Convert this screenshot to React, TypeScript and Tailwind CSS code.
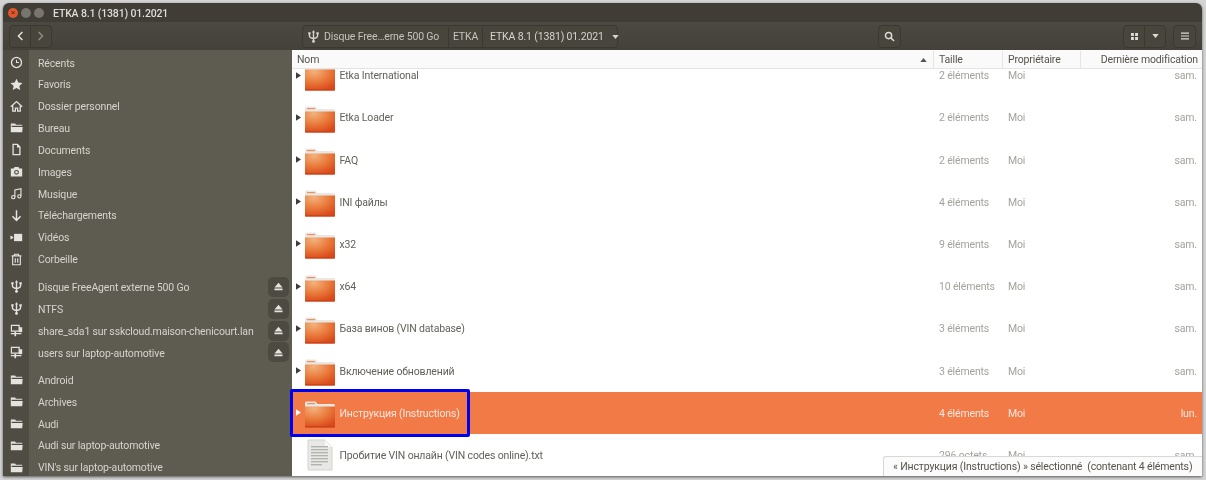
import React from "react";

const ICON = "#e4e3de";

function Glyph({ children }: { children: React.ReactNode }) {
  return (
    <svg viewBox="0 0 16 16" className="size-[13px] shrink-0" fill={ICON}>
      {children}
    </svg>
  );
}

const ClockIcon = () => (
  <Glyph>
    <circle cx="8" cy="8" r="6.2" fill="none" stroke={ICON} strokeWidth="1.6" />
    <path d="M8 4.5V8H11" fill="none" stroke={ICON} strokeWidth="1.3" />
  </Glyph>
);
const StarIcon = () => (
  <Glyph>
    <path d="M8 .8l2.2 4.8 5.2.6-3.9 3.5 1.1 5.2L8 12.3l-4.6 2.6 1.1-5.2L.6 6.2l5.2-.6z" />
  </Glyph>
);
const HomeIcon = () => (
  <Glyph>
    <path
      d="M1 8.2L8 2l7 6.2M3.4 7v6.8h3.2V10h2.8v3.8h3.2V7"
      fill="none"
      stroke={ICON}
      strokeWidth="1.6"
    />
  </Glyph>
);
const FolderIcon = () => (
  <Glyph>
    <path d="M1 3.2h5.2l1.2 1.5H15v1H2v1.6h13.6l-.6 6.5H1z" />
  </Glyph>
);
const DocIcon = () => (
  <Glyph>
    <path fillRule="evenodd" d="M3 1h6.5L13 4.5V15H3zM4.6 2.6v10.8h6.8V5.6H8.6v-3z" />
  </Glyph>
);
const CameraIcon = () => (
  <Glyph>
    <path
      fillRule="evenodd"
      d="M5.5 2.5h5l1 1.8H15V14H1V4.3h3.5zM8 6a3 3 0 100 6 3 3 0 000-6z"
    />
    <circle cx="8" cy="9" r="1.5" />
  </Glyph>
);
const MusicIcon = () => (
  <Glyph>
    <path d="M6 12.5V3.5L13.5 2v9" fill="none" stroke={ICON} strokeWidth="1.4" />
    <circle cx="4" cy="12.5" r="2" fill="none" stroke={ICON} strokeWidth="1.4" />
    <circle cx="11.5" cy="11.5" r="2" fill="none" stroke={ICON} strokeWidth="1.4" />
  </Glyph>
);
const DownIcon = () => (
  <Glyph>
    <path d="M8 1.500V14M3 9l5 5 5-5" fill="none" stroke={ICON} strokeWidth="1.8" />
  </Glyph>
);
const VideoIcon = () => (
  <Glyph>
    <rect x="5" y="3.5" width="10" height="9" />
    <path d="M.5 5.500l3.500 2v1L.5 10.500z" />
  </Glyph>
);
const TrashIcon = () => (
  <Glyph>
    <path
      d="M2 3.500h12M5.500 3V1.500h5V3M3.300 3.800V14.500h9.400V3.800M6.500 6.500v5.500M9.500 6.500v5.500"
      fill="none"
      stroke={ICON}
      strokeWidth="1.4"
    />
  </Glyph>
);
const UsbIcon = ({ color = ICON }: { color?: string }) => (
  <svg viewBox="0 0 16 16" className="size-[13px] shrink-0">
    <path
      d="M8 1v14M3 4.500V7.500Q3 9.800 8 10.500Q13 9.800 13 7.500V4.500"
      fill="none"
      stroke={color}
      strokeWidth="1.7"
    />
    <path d="M8 .2l1.800 2.800H6.200zM1.500 2.800h3v2.500h-3zM11.500 2.800h3v2.500h-3z" fill={color} />
    <circle cx="8" cy="14" r="1.7" fill={color} />
  </svg>
);
const NetIcon = () => (
  <Glyph>
    <path fillRule="evenodd" d="M1 1h11v8.500H1zM2.500 2.500V8h8V2.500z" />
    <path d="M5.500 9.500h2V11H14v1.500H7.500V15h-2v-2.500H1V11h4.500z" />
    <rect x="11" y="4" width="4" height="6" />
  </Glyph>
);

const EjectIcon = () => (
  <svg viewBox="0 0 10 10" className="size-[9px]" fill={ICON}>
    <path d="M5 .8L9.500 6H.5zM.5 7.300h9v1.900h-9z" />
  </svg>
);

type Place = {
  label: string;
  icon: React.ReactNode;
  eject?: boolean;
};

const groupOne: Place[] = [
  { label: "Récents", icon: <ClockIcon /> },
  { label: "Favoris", icon: <StarIcon /> },
  { label: "Dossier personnel", icon: <HomeIcon /> },
  { label: "Bureau", icon: <FolderIcon /> },
  { label: "Documents", icon: <DocIcon /> },
  { label: "Images", icon: <CameraIcon /> },
  { label: "Musique", icon: <MusicIcon /> },
  { label: "Téléchargements", icon: <DownIcon /> },
  { label: "Vidéos", icon: <VideoIcon /> },
  { label: "Corbeille", icon: <TrashIcon /> },
];

const groupTwo: Place[] = [
  { label: "Disque FreeAgent externe 500 Go", icon: <UsbIcon />, eject: true },
  { label: "NTFS", icon: <UsbIcon />, eject: true },
  { label: "share_sda1 sur sskcloud.maison-chenicourt.lan", icon: <NetIcon />, eject: true },
  { label: "users sur laptop-automotive", icon: <NetIcon />, eject: true },
];

const groupThree: Place[] = [
  { label: "Android", icon: <FolderIcon /> },
  { label: "Archives", icon: <FolderIcon /> },
  { label: "Audi", icon: <FolderIcon /> },
  { label: "Audi sur laptop-automotive", icon: <FolderIcon /> },
  { label: "VIN's sur laptop-automotive", icon: <FolderIcon /> },
];

const files = [
  { name: "Etka International", size: "2 éléments", date: "sam." },
  { name: "Etka Loader", size: "2 éléments", date: "sam." },
  { name: "FAQ", size: "2 éléments", date: "sam." },
  { name: "INI файлы", size: "4 éléments", date: "sam." },
  { name: "x32", size: "9 éléments", date: "sam." },
  { name: "x64", size: "10 éléments", date: "sam." },
  { name: "База винов (VIN database)", size: "3 éléments", date: "sam." },
  { name: "Включение обновлений", size: "3 éléments", date: "sam." },
  { name: "Инструкция (Instructions)", size: "4 éléments", date: "lun.", selected: true },
  { name: "Пробитие VIN онлайн (VIN codes online).txt", size: "296 octets", date: "sam.", text: true },
];

function PlaceRow({ place }: { place: Place }) {
  return (
    <div className="flex h-[21.85px] items-center">
      <div className="flex w-[26px] shrink-0 justify-center">{place.icon}</div>
      <span className="ml-[9px] pt-[2px] whitespace-nowrap text-[#d5d4ce]">{place.label}</span>
      {place.eject && (
        <div className="mr-[3px] ml-auto flex h-[20px] w-[21px] shrink-0 items-center justify-center rounded-[5px] bg-[#4c4a41]">
          <EjectIcon />
        </div>
      )}
    </div>
  );
}

function OrangeFolder() {
  return (
    <svg viewBox="0 0 30 27" className="mt-[4px] h-[27px] w-[30px] shrink-0">
      <defs>
        <radialGradient id="folderFill" cx="0.3" cy="0.1" r="0.95">
          <stop offset="0" stopColor="#f3b27c" />
          <stop offset="0.55" stopColor="#e9793a" />
          <stop offset="1" stopColor="#d9481a" />
        </radialGradient>
      </defs>
      <path d="M0 2Q0 .5 1.500 .5h9l2 2.500h16Q30 3 30 4.500v4H0z" fill="#e9e7e4" />
      <rect x="2" y="2" width="8" height="1.2" fill="#f0915a" />
      <path d="M0 5.500h30v19.500q0 1.500-1.500 1.500h-27Q0 26.500 0 25z" fill="url(#folderFill)" />
      <rect y="25" width="30" height="1.5" fill="#c9441a" />
    </svg>
  );
}

function TextFile() {
  return (
    <svg viewBox="0 0 26 32" className="h-[32px] w-[26px] shrink-0">
      <path d="M1 1h17l7 7v23H1z" fill="#e8e8e6" stroke="#d3d3d0" />
      <path d="M18 1v7h7z" fill="#f8f8f7" />
      {[7, 10, 13, 16, 19, 22, 25].map((y) => (
        <rect key={y} x="4" y={y} width={y === 25 ? 11 : 17} height="1.4" fill="#b3b3b0" />
      ))}
    </svg>
  );
}

function Triangle({ color }: { color: string }) {
  return (
    <svg viewBox="0 0 6 8" className="h-[7px] w-[5px] shrink-0" fill={color}>
      <path d="M0 0l6 4-6 4z" />
    </svg>
  );
}

function ToolButton({
  className,
  children,
}: {
  className: string;
  children: React.ReactNode;
}) {
  return (
    <div
      className={`flex h-[23px] items-center justify-center border border-[#3a3830] bg-[#47453c] ${className}`}
    >
      {children}
    </div>
  );
}

export default function App() {
  return (
    <div
      className="relative h-[480px] w-[1206px] overflow-hidden bg-[#d4d4d4] pt-[3px] pr-[4px] pb-[4px] pl-[3px] text-[10.5px] tracking-[-0.15px] blur-[0.5px]"
      style={{ fontFamily: 'Roboto, "Noto Sans", sans-serif' }}
    >
      <div className="flex h-full flex-col overflow-hidden rounded-t-[6px] shadow-[0_1px_3px_#555]">
        {/* title bar */}
        <div className="flex h-[19px] shrink-0 items-center bg-[#3f3d36] pl-[5px]">
          <div className="flex items-center gap-[3px]">
            <div className="flex size-[10px] items-center justify-center rounded-full bg-[#e2572b] text-[8px] leading-none text-[#5a2412]">
              ×
            </div>
            <div className="size-[10px] rounded-full bg-[#77756c]" />
            <div className="size-[10px] rounded-full bg-[#77756c]" />
          </div>
          <span className="ml-[9px] pt-[3px] font-medium text-[#dddcd6]">ETKA 8.1 (1381) 01.2021</span>
        </div>

        {/* toolbar */}
        <div className="flex h-[28px] shrink-0 items-center bg-gradient-to-b from-[#4b4941] to-[#43413a] pr-[6px] pl-[6px]">
          <ToolButton className="w-[22px] rounded-l-[4px]">
            <svg viewBox="0 0 10 12" className="h-[10px] w-[8px]" fill="none" stroke="#e6e5df" strokeWidth="1.8">
              <path d="M8 1L3 6l5 5" />
            </svg>
          </ToolButton>
          <ToolButton className="-ml-px w-[22px] rounded-r-[4px]">
            <svg viewBox="0 0 10 12" className="h-[10px] w-[8px]" fill="none" stroke="#8f8e86" strokeWidth="1.8">
              <path d="M2 1l5 5-5 5" />
            </svg>
          </ToolButton>

          <div className="ml-[250px] flex h-[23px] w-[316px] items-center rounded-[4px] border border-[#3a3830] bg-[#47453c] pt-px text-[#c4c3bc]">
            <div className="flex h-full w-[146px] shrink-0 items-center border-r border-[#3a3830] pl-[4px]">
              <UsbIcon color="#d5d4ce" />
              <span className="ml-[4px] whitespace-nowrap">Disque Free…erne 500 Go</span>
            </div>
            <div className="flex h-full w-[34px] shrink-0 items-center justify-center border-r border-[#3a3830]">
              ETKA
            </div>
            <div className="flex h-full flex-1 items-center pl-[7px] text-[#d5d4ce]">
              <span className="whitespace-nowrap">ETKA 8.1 (1381) 01.2021</span>
              <svg viewBox="0 0 8 5" className="ml-[8px] h-[4px] w-[7px]" fill="#d5d4ce">
                <path d="M0 0h8L4 5z" />
              </svg>
            </div>
          </div>

          <ToolButton className="ml-auto w-[23px] rounded-[4px]">
            <svg viewBox="0 0 12 12" className="size-[11px]" fill="none" stroke="#dddcd6" strokeWidth="1.6">
              <circle cx="5" cy="5" r="3.4" />
              <path d="M7.500 7.500L11 11" />
            </svg>
          </ToolButton>

          <div className="ml-[222px] flex">
            <ToolButton className="w-[22px] rounded-l-[4px]">
              <svg viewBox="0 0 8 8" className="size-[7px]" fill="#dddcd6">
                <path d="M0 0h3.300v3.300H0zM4.700 0H8v3.300H4.700zM0 4.700h3.300V8H0zM4.700 4.700H8V8H4.700z" />
              </svg>
            </ToolButton>
            <ToolButton className="-ml-px w-[22px] rounded-r-[4px]">
              <svg viewBox="0 0 8 5" className="h-[4px] w-[7px]" fill="#dddcd6">
                <path d="M0 0h8L4 5z" />
              </svg>
            </ToolButton>
          </div>
          <ToolButton className="ml-[7px] w-[23px] rounded-[4px]">
            <svg viewBox="0 0 8 8" className="size-[8px]" fill="#dddcd6">
              <path d="M0 .5h8v1.200H0zM0 3.400h8v1.200H0zM0 6.300h8v1.200H0z" />
            </svg>
          </ToolButton>
        </div>

        <div className="flex min-h-0 flex-1">
          {/* sidebar */}
          <div className="relative w-[289px] shrink-0 overflow-hidden bg-[#5e5c50] pt-[1.5px]">
            <div className="absolute inset-y-0 left-0 w-[26px] bg-[#4e4c43]" />
            <div className="relative">
              {groupOne.map((place) => (
                <PlaceRow key={place.label} place={place} />
              ))}
              <div className="h-[6px]" />
              {groupTwo.map((place) => (
                <PlaceRow key={place.label} place={place} />
              ))}
              <div className="h-[5.5px]" />
              {groupThree.map((place) => (
                <PlaceRow key={place.label} place={place} />
              ))}
            </div>
          </div>

          {/* file list */}
          <div className="flex min-w-0 flex-1 flex-col bg-white">
            <div className="relative z-10 flex h-[19px] shrink-0 items-center border-b border-[#e4e4e2] bg-[#fafafa] pt-[1px] text-[#55534c]">
              <div className="flex h-full w-[642px] items-center justify-between border-r border-[#e4e4e2] pr-[6px] pl-[5px]">
                <span>Nom</span>
                <svg viewBox="0 0 8 5" className="h-[4px] w-[7px]" fill="#55534c">
                  <path d="M4 0l4 5H0z" />
                </svg>
              </div>
              <div className="flex h-full w-[69px] items-center border-r border-[#e4e4e2] pl-[5px]">
                Taille
              </div>
              <div className="flex h-full w-[78px] items-center border-r border-[#e4e4e2] pl-[5px]">
                Propriétaire
              </div>
              <div className="flex h-full flex-1 items-center justify-end pr-[4px] whitespace-nowrap">
                Dernière modification
              </div>
            </div>

            <div className="min-h-0 flex-1 overflow-hidden">
              <div className="-mt-[15px]">
                {files.map((file) => (
                  <div
                    key={file.name}
                    className={`flex h-[42.2px] items-center ${file.selected ? "bg-[#f27a47] text-[#fbe7dd]" : "text-[#62615b]"}`}
                  >
                    <div className="flex w-[9px] shrink-0 justify-end">
                      {!file.text && <Triangle color={file.selected ? "#ffffff" : "#3f3d36"} />}
                    </div>
                    <div className="ml-[4px] flex w-[30px] shrink-0 justify-center">
                      {file.text ? <TextFile /> : <OrangeFolder />}
                    </div>
                    <span className="ml-[4.5px] w-[599.5px] shrink-0 pt-[2px] whitespace-nowrap">{file.name}</span>
                    <span className={`w-[69px] shrink-0 pt-[2px] ${file.selected ? "" : "text-[#a3a29d]"}`}>
                      {file.size}
                    </span>
                    <span className={`w-[78px] shrink-0 pt-[2px] ${file.selected ? "" : "text-[#a3a29d]"}`}>
                      Moi
                    </span>
                    <span className={`flex-1 pt-[2px] pr-[5px] text-right ${file.selected ? "" : "text-[#a3a29d]"}`}>
                      {file.date}
                    </span>
                  </div>
                ))}
              </div>
            </div>
          </div>
        </div>
      </div>

      {/* highlight added over the screenshot */}
      <div className="absolute top-[389px] left-[290px] h-[48px] w-[180px] rounded-[2px] border-[3px] border-[#0000f0]" />

      {/* floating status bar */}
      <div className="absolute top-[456px] left-[883px] flex h-[20px] w-[319px] items-center rounded-tl-[3px] border-t border-l border-[#d8d8d6] bg-[#fbfbfb] pt-[1px] pl-[9px] whitespace-nowrap text-[#55534c]">
        « Инструкция (Instructions) » sélectionné&nbsp; (contenant 4 éléments)
      </div>
    </div>
  );
}
